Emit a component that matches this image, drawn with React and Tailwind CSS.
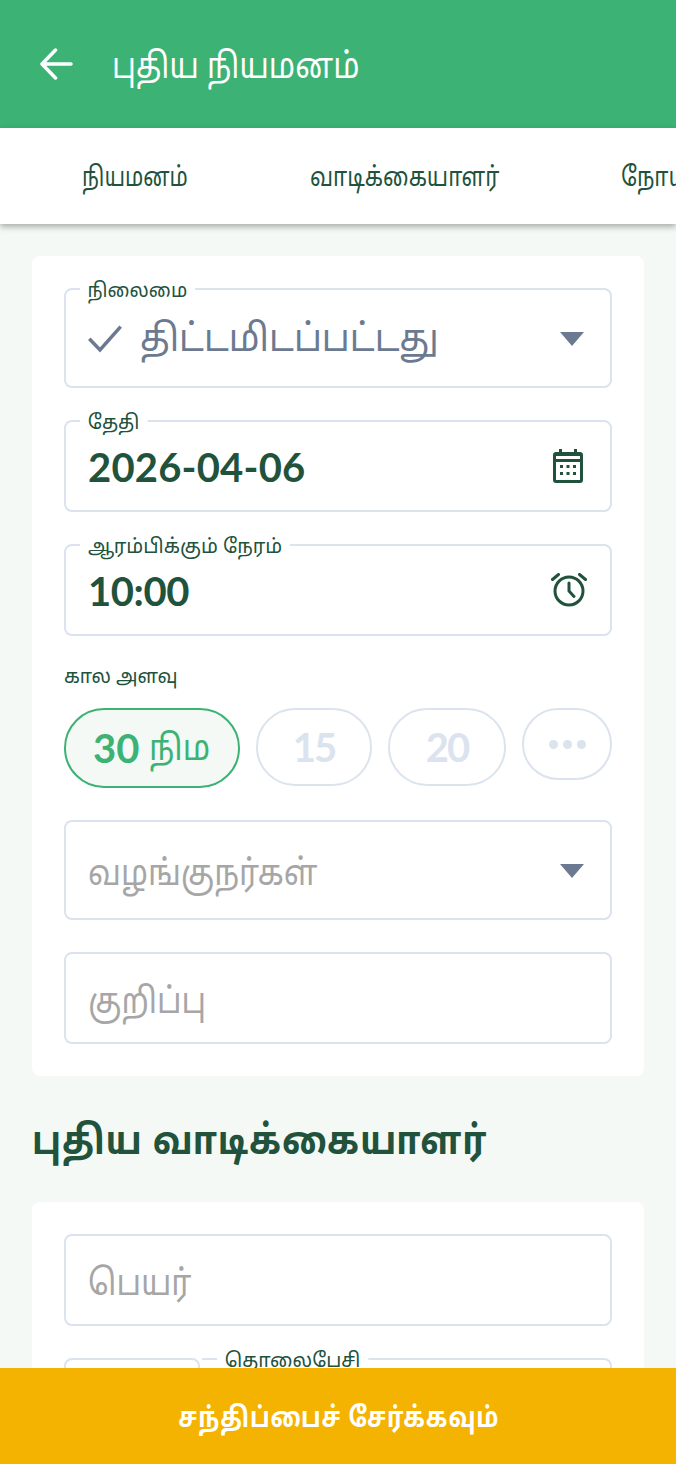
import React from 'react';

const tamil = "font-['Noto_Sans_Tamil','Noto_Sans','DejaVu_Sans',sans-serif]";
const digits = "font-['Lato',sans-serif]";

const Field = ({ label, height, labelClass = 'left-[14px] scale-x-[.98]', children, className = '' }) => (
  <div className={`relative flex items-center rounded-lg border-2 border-[#dbe3ee] bg-white px-[22px] ${height} ${className}`}>
    {label && (
      <span className={`absolute -top-[10px] origin-left whitespace-nowrap bg-white px-[8px] text-[20px] leading-[24px] text-[#21523c] ${labelClass}`}>
        {label}
      </span>
    )}
    {children}
  </div>
);

const Placeholder = ({ children }) => (
  <span className="mt-[11px] origin-left scale-x-[.875] whitespace-nowrap text-[36px] text-[#a6a6a6]">{children}</span>
);

const Caret = () => (
  <svg width="24" height="14" viewBox="0 0 24 14" className="ml-auto mr-[4px] mt-[2px] shrink-0">
    <path d="M0 0h24L12 14z" fill="#6b7a90" />
  </svg>
);

const Pill = ({ children, className = '' }) => (
  <div className={`flex items-center justify-center rounded-full border-2 border-[#dbe3ee] bg-white text-[40px] font-bold text-[#dbe3ee] ${className}`}>
    {children}
  </div>
);

export default function App() {
  return (
    <div className={`flex h-[1464px] w-[676px] flex-col overflow-hidden bg-[#f4f9f6] ${tamil}`}>
      <header className="flex h-[128px] shrink-0 items-center bg-[#3cb275] pl-[40px]">
        <svg width="33" height="32" viewBox="0 0 33 32" fill="none" stroke="white" strokeWidth="3.5" strokeLinecap="round" strokeLinejoin="round">
          <path d="M31 16H2M15.500 2 2 16l13.500 14" />
        </svg>
        <h1 className="ml-[39px] mt-[10px] origin-left scale-x-[.854] whitespace-nowrap text-[36px] font-normal text-white">புதிய நியமனம்</h1>
      </header>

      <nav className="z-10 flex h-[96px] shrink-0 items-center overflow-hidden whitespace-nowrap bg-white pl-[82px] text-[27px] text-[#21523c] shadow-[0_3px_6px_rgba(0,0,0,0.3)]">
        <span className="mt-[8px] origin-left scale-x-[.79]">நியமனம்</span>
        <span className="ml-[94px] mt-[8px] origin-left scale-x-[.818]">வாடிக்கையாளர்</span>
        <span className="ml-[79px] mt-[8px] origin-left scale-x-[.818]">நோயாளி</span>
      </nav>

      <main className="min-h-0 flex-1 overflow-hidden px-[32px] pt-[32px]">
        <section className="flex flex-col gap-[32px] rounded-lg bg-white p-[32px]">
          <Field label="நிலைமை" labelClass="left-[14px] scale-x-[.95]" height="h-[100px]">
            <svg width="34" height="28" viewBox="0 0 34 28" className="mt-[2px] shrink-0" fill="none" stroke="#6b7a90" strokeWidth="3.500" strokeLinecap="square">
              <path d="M2.500 15l9.500 10L31.500 3" />
            </svg>
            <span className="ml-[18px] mt-[6px] origin-left scale-x-[.945] whitespace-nowrap text-[38px] text-[#6b7a90]">திட்டமிடப்பட்டது</span>
            <Caret />
          </Field>

          <Field label="தேதி" height="h-[92px]">
            <span className={`mt-[2px] text-[40px] font-bold tracking-[.2px] text-[#21523c] ${digits}`}>2026-04-06</span>
            <svg width="30" height="34" viewBox="0 0 30 34" className="ml-auto mr-[5px] shrink-0" fill="#21523c">
              <path fillRule="evenodd" d="M6 0h3v3h12V0h3v3h3a3 3 0 0 1 3 3v25a3 3 0 0 1-3 3H3a3 3 0 0 1-3-3V6a3 3 0 0 1 3-3h3zM3 7v3h24V7zm0 6v18h24V13z" />
              <rect x="7" y="16" width="3" height="3" /><rect x="13.500" y="16" width="3" height="3" /><rect x="20" y="16" width="3" height="3" />
              <rect x="7" y="23" width="3" height="3" /><rect x="13.500" y="23" width="3" height="3" /><rect x="20" y="23" width="3" height="3" />
            </svg>
          </Field>

          <Field label="ஆரம்பிக்கும் நேரம்" labelClass="left-[14px] scale-x-[.985]" height="h-[92px]">
            <span className={`mt-[2px] text-[40px] font-bold tracking-[-.4px] text-[#21523c] ${digits}`}>10:00</span>
            <svg width="36" height="34" viewBox="0 0 36 34" className="ml-auto mr-[1px] shrink-0" fill="none" stroke="#21523c" strokeWidth="3" strokeLinecap="round" strokeLinejoin="round">
              <circle cx="18" cy="18" r="14" />
              <path d="M18 10v8l5 5.500M1.500 6.500l6-5M34.500 6.500l-6-5" />
            </svg>
          </Field>

          <div>
            <p className="origin-left scale-x-[.96] text-[20px] leading-[20px] text-[#21523c]">கால அளவு</p>
            <div className="mt-[20px] flex items-start gap-[16px]">
              <Pill className="h-[80px] w-[176px] !justify-start !border-[#3cb275] !bg-[#f4f9f6] pl-[27px] !text-[#3cb275]">
                <span className={digits}>30</span>
                <span className="ml-[10px] mt-[6px] origin-left scale-x-[.89] text-[36px] font-normal">நிம</span>
              </Pill>
              <Pill className={`h-[78px] w-[116px] tracking-[-2px] ${digits}`}>15</Pill>
              <Pill className={`h-[78px] w-[118px] tracking-[-2px] ${digits}`}>20</Pill>
              <Pill className="h-[72px] w-[90px] gap-[5px]">
                <i className="h-[9px] w-[9px] rounded-full bg-[#dbe3ee]" />
                <i className="h-[9px] w-[9px] rounded-full bg-[#dbe3ee]" />
                <i className="h-[9px] w-[9px] rounded-full bg-[#dbe3ee]" />
              </Pill>
            </div>
          </div>

          <Field height="h-[100px]">
            <Placeholder>வழங்குநர்கள்</Placeholder>
            <Caret />
          </Field>

          <Field height="h-[92px]">
            <Placeholder>குறிப்பு</Placeholder>
          </Field>
        </section>

        <h2 className="mt-[38px] origin-left scale-x-[.875] whitespace-nowrap text-[40px] font-bold leading-[60px] tracking-[1px] text-[#21523c]">புதிய வாடிக்கையாளர்</h2>

        <section className="mt-[28px] flex flex-col gap-[32px] rounded-lg bg-white p-[32px]">
          <Field height="h-[92px]">
            <Placeholder>பெயர்</Placeholder>
          </Field>
          <div className="flex">
            <Field height="h-[92px]" className="w-[136px]" />
            <Field label="தொலைபேசி" labelClass="left-[15px] scale-x-[.97]" height="h-[92px]" className="ml-[2px] flex-1 !rounded-l-none !border-l-0" />
          </div>
        </section>
      </main>

      <footer className="z-10 flex h-[96px] shrink-0 items-center justify-center bg-[#f5b301] text-[28px] font-bold tracking-[1px] text-white">
        <span className="ml-[2px] mt-[8px] scale-x-[.846] whitespace-nowrap">சந்திப்பைச் சேர்க்கவும்</span>
      </footer>
    </div>
  );
}
